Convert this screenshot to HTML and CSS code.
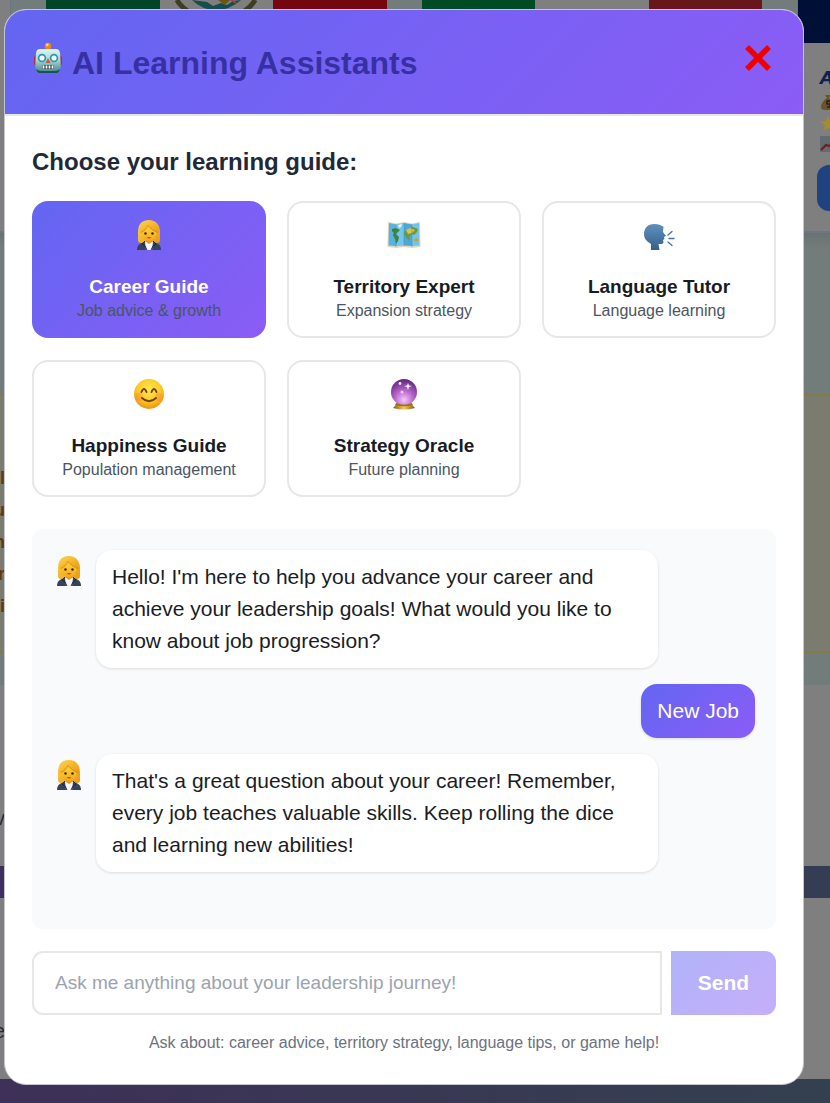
FILE: index.html
```html
<!DOCTYPE html>
<html lang="en">
<head>
<meta charset="utf-8">
<meta name="viewport" content="width=device-width, initial-scale=1">
<title>AI Learning Assistants</title>
<link rel="stylesheet" href="styles.css">
</head>
<body>
<svg class="defs" aria-hidden="true">
  <defs>
    <linearGradient id="hair" x1="0" y1="0" x2="1" y2="1"><stop offset="0" stop-color="#ffd24a"/><stop offset="1" stop-color="#e99a13"/></linearGradient>
    <linearGradient id="skin" x1="0" y1="0" x2="0" y2="1"><stop offset="0" stop-color="#ffd83d"/><stop offset="1" stop-color="#f7a91b"/></linearGradient>
    <linearGradient id="metal" x1="0" y1="0" x2="0" y2="1"><stop offset="0" stop-color="#dff6f3"/><stop offset=".45" stop-color="#a8d8d6"/><stop offset="1" stop-color="#3f8488"/></linearGradient>
    <linearGradient id="head" x1="0" y1="0" x2="0" y2="1"><stop offset="0" stop-color="#5f91bd"/><stop offset="1" stop-color="#345f8d"/></linearGradient>
    <radialGradient id="face" cx=".5" cy=".35" r=".65"><stop offset="0" stop-color="#ffe94a"/><stop offset=".6" stop-color="#fdc927"/><stop offset="1" stop-color="#ee9312"/></radialGradient>
    <radialGradient id="orb" cx=".5" cy=".8" r=".8"><stop offset="0" stop-color="#f3c9fb"/><stop offset=".45" stop-color="#b766cb"/><stop offset="1" stop-color="#5b2378"/></radialGradient>
    <linearGradient id="gold" x1="0" y1="0" x2="1" y2="0"><stop offset="0" stop-color="#8a5a12"/><stop offset=".5" stop-color="#f2ca55"/><stop offset="1" stop-color="#8a5a12"/></linearGradient>
    <symbol id="woman" viewBox="0 0 30 32">
      <path d="M15 1C7 1 4 6 4 13v8q0 3 3 3h16q3 0 3-3v-8C26 6 22 1 15 1Z" fill="url(#hair)"/>
      <path d="M3 31c0-5 3-7 8-8h8c5 1 8 3 8 8Z" fill="#34445d"/>
      <path d="M11 23h8l-1 8h-6Z" fill="#f4f8fc"/>
      <path d="M12 19h6v4l-3 2-3-2Z" fill="#e59a1c"/>
      <path d="M11 22l-3 3 3 2 2 4M19 22l3 3-3 2-2 4" fill="none" stroke="#1c2940" stroke-width="1"/>
      <path d="M7.500 12c0-4 3-7 7.500-7s7.500 3 7.500 8c0 5-3.500 9-7.500 9s-7.500-4-7.500-10Z" fill="url(#skin)"/>
      <path d="M5 14C5 7 9 2.500 16 2.500c6 0 9 5 9 11-4-1-8.500-3.500-11-7-1.500 3.500-4 6-9 7.500Z" fill="url(#hair)"/>
      <path d="M14 6.500c2.500 3.500 6.500 6 10 7M14 6.500c-1.500 3-4 5.500-7 7" fill="none" stroke="#c47c0d" stroke-width=".7"/>
      <circle cx="11.500" cy="14.500" r="1.300" fill="#41270f"/><circle cx="18.500" cy="14.500" r="1.300" fill="#41270f"/>
      <path d="M12.500 18.500q2.500-1 5 0-2.500 2-5 0Z" fill="#bd492e"/>
    </symbol>
    <symbol id="robot" viewBox="0 0 30 32">
      <path d="M14 5h2v5h-2Z" fill="#446"/><circle cx="15" cy="4" r="3.300" fill="#e88b16"/><circle cx="14.300" cy="2.900" r="1.400" fill="#ffd36a"/>
      <rect x="1" y="14" width="4" height="9" rx="1.500" fill="#b72b40"/><rect x="25" y="14" width="4" height="9" rx="1.500" fill="#b72b40"/>
      <path d="M7 7h16q3.500 0 4 4l.5 7q.5 7-.5 10-1 3-4 3H7q-3 0-4-3-1-3-.5-10L3 11q.5-4 4-4Z" fill="url(#metal)"/>
      <path d="M3 27q1 4 4 4h16q3 0 4-4-2 2-5 2H8q-3 0-5-2Z" fill="#1f4f57"/>
      <g fill="#fff" stroke="#249bad" stroke-width="1.700"><circle cx="9" cy="16" r="3.400"/><circle cx="21" cy="16" r="3.400"/></g>
      <path d="m15 16 2.500 5h-5Z" fill="#d9503f"/>
      <rect x="9" y="23" width="12" height="4" rx="1.500" fill="#344d57"/>
      <path d="M10.500 23.500v3M13.500 23.500v3M16.500 23.500v3M19.500 23.500v3" stroke="#fff" stroke-width="1.700"/>
    </symbol>
    <symbol id="map" viewBox="0 0 34 30">
      <path d="m1 2 8 1.500L17 2l8 1.500L33 2l.5 25-8.500 1-8-1-8 1-8.500-1Z" fill="#e8d4bd"/>
      <path d="m2 3 7 1.500V26l-7.500-.5Z" fill="#55b3df"/><path d="m9 4.500 8-1.500v22.500L9 26Z" fill="#73c6e9"/><path d="m17 3 8 1.500V26l-8-.5Z" fill="#4ba9da"/><path d="m25 4.500 7-1.500.5 22.500L25 26Z" fill="#72c5e8"/>
      <path d="m5 9 4-1 4 2-2 2-2 2 3 3-1 4-2 3-1-5-2-4 1-2-2-2Z" fill="#427f36"/>
      <path d="m18 11 3-2 5-2 5 2-1 3-3 3-2-1-2 2-1 5-3-4-2-3Z" fill="#729737"/>
      <path d="m19 10 4-2 5 2-3 3-4 1Z" fill="#d9c254"/><path d="m27 19 3-1 2 2-2 2-3-1Z" fill="#bca94b"/><path d="m11 5 4-1-1 3-2 1Z" fill="#edf7ef"/>
      <path d="M9 4v23M17 3v23M25 4v23" stroke="#378cb2" stroke-opacity=".45"/>
    </symbol>
    <symbol id="speak" viewBox="0 0 32 28">
      <path d="M8 27v-6C3 18 1 15 1 11 1 5 5 1 11 1c5 0 8 2 9.500 2.500L20 9l3 4-2 1 .5 2-1.500 1 .5 2q0 2-3 2h-2l1 6Z" fill="url(#head)"/>
      <path d="m25 12 4-3.500M26 15.500h5M25 19l4 3.500" stroke="#4673a0" stroke-width="1.300" stroke-linecap="round"/>
    </symbol>
    <symbol id="smile" viewBox="0 0 32 32">
      <circle cx="16" cy="16" r="15" fill="url(#face)"/>
      <circle cx="6" cy="19" r="4" fill="#f57a37" opacity=".35"/><circle cx="26" cy="19" r="4" fill="#f57a37" opacity=".35"/>
      <path d="M8.500 14q2.500-6 5 0M18.500 14q2.500-6 5 0M9 20q7 6.500 14 0" fill="none" stroke="#71420f" stroke-width="1.900" stroke-linecap="round"/>
    </symbol>
    <symbol id="crystal" viewBox="0 0 28 32">
      <path d="M6 25h16l1 3 2 2q-11 3-22 0l2-2Z" fill="url(#gold)"/>
      <circle cx="14" cy="14" r="13" fill="url(#orb)"/>
      <path d="M6 26q8 3 16 0" fill="none" stroke="#a36c1e" stroke-width="1.500"/>
      <path d="m18 5 1 2.500L22 8l-3 1-1 3-1-3-3-1 3-.5Z" fill="#fff"/><circle cx="10" cy="5.500" r="1.400" fill="#fbe8ff"/><circle cx="12" cy="14" r="1.500" fill="#ffc7fa"/>
    </symbol>
  </defs>
</svg>

<div class="page" aria-hidden="true">
  <div class="flags">
    <div class="flag flag-mx"><i></i><i class="crest"><svg viewBox="0 0 84 12"><path d="M3 0q3 6 12 12M81 0q-3 6-12 12" stroke="#3d3d22" stroke-width="5" fill="none"/><path d="M18 0q10 10 24 10Q56 10 67 0l-8 1-6 4-6-2-8 3-6-4Z" fill="#174d4c"/><path d="m44 0 7 5 5-5" fill="#6c5416"/><path d="m57 0 5 3" stroke="#a0433c" stroke-width="2"/></svg></i><i></i></div>
    <div class="flag flag-it"><i></i><i></i><i></i></div>
  </div>
  <div class="country">
    <div class="country-head"></div>
    <div class="country-body">
      <b>A</b>
      <svg viewBox="0 0 16 16"><path d="M5 1h6L9 4q6 4 6 9 0 3-4 3H5q-4 0-4-3 0-5 6-9Z" fill="#6b5526"/><path d="M10 7H7v3h3v3H7" stroke="#242016" stroke-width="1.500" fill="none"/></svg>
      <svg viewBox="0 0 16 16"><path d="m8 0 2 6 6 .5-5 4 2 5.500-5-3-5 3 2-5.500-5-4L6 6Z" fill="#a38b31"/></svg>
      <svg viewBox="0 0 16 16"><path d="M0 0h16v16H0Z" fill="#646a72"/><path d="m1 14 5-5 3 1 7-6" stroke="#7b1520" stroke-width="2" fill="none"/></svg>
      <span></span>
    </div>
  </div>
  <div class="sky"></div>
  <div class="notice"><span>il</span><span>u</span><span>n</span><span>r</span><span>li</span></div>
  <div class="sky sky-short"></div>
  <div class="panel"><span>v</span></div>
  <div class="band"></div>
  <div class="panel panel-low"><span>e</span></div>
  <div class="band foot"></div>
</div>

<main class="modal" role="dialog" aria-labelledby="title">
  <header class="modal-head">
    <h1 id="title"><svg class="robot" aria-hidden="true"><use href="#robot"/></svg><span>AI Learning Assistants</span></h1>
    <button class="close" type="button" aria-label="Close"><svg viewBox="0 0 28 28"><path d="m3 3 22 22M25 3 3 25" stroke="#f00000" stroke-width="5.500"/></svg></button>
  </header>
  <div class="modal-body">
    <h2>Choose your learning guide:</h2>
    <div class="guides">
      <button type="button" class="guide active" aria-pressed="true"><svg><use href="#woman"/></svg><strong>Career Guide</strong><span>Job advice &amp; growth</span></button>
      <button type="button" class="guide"><svg><use href="#map"/></svg><strong>Territory Expert</strong><span>Expansion strategy</span></button>
      <button type="button" class="guide"><svg class="low"><use href="#speak"/></svg><strong>Language Tutor</strong><span>Language learning</span></button>
      <button type="button" class="guide"><svg><use href="#smile"/></svg><strong>Happiness Guide</strong><span>Population management</span></button>
      <button type="button" class="guide"><svg><use href="#crystal"/></svg><strong>Strategy Oracle</strong><span>Future planning</span></button>
    </div>
    <section class="chat" aria-label="Conversation">
      <div class="message"><svg class="avatar" aria-hidden="true"><use href="#woman"/></svg><p>Hello! I'm here to help you advance your career and achieve your leadership goals! What would you like to know about job progression?</p></div>
      <div class="message user"><p>New Job</p></div>
      <div class="message"><svg class="avatar" aria-hidden="true"><use href="#woman"/></svg><p>That's a great question about your career! Remember, every job teaches valuable skills. Keep rolling the dice and learning new abilities!</p></div>
    </section>
    <form class="ask">
      <input type="text" aria-label="Your question" placeholder="Ask me anything about your leadership journey!">
      <button type="button" disabled>Send</button>
    </form>
    <p class="hint">Ask about: career advice, territory strategy, language tips, or game help!</p>
  </div>
</main>
</body>
</html>
```

FILE: styles.css
```css
* { box-sizing: border-box; }

body {
  margin: 0;
  display: grid;
  min-height: 100vh;
  font-family: "Liberation Sans", Arial, sans-serif;
  color: #1f2937;
}

.page, .modal { grid-area: 1 / 1; }
.defs { position: absolute; width: 0; height: 0; }
h1, h2, p { margin: 0; }
button, input { font-family: inherit; }

/* Dimmed page behind the dialog */
.page {
  position: relative;
  display: flex;
  flex-direction: column;
  overflow: hidden;
  background: #727c7b;
}
.flags {
  position: absolute;
  top: 0;
  left: 10px;
  right: 32px;
  height: 43px;
  display: flex;
  gap: 35px;
  padding: 0 35px;
  border: solid #687785;
  border-width: 0 1px;
  background: #727c7b;
}
.flag { flex: 1; display: flex; }
.flag i { flex: 1; }
.crest svg { display: block; width: 84px; height: 12px; margin: 0 auto; }
.flag-mx i:first-child { background: #004526; }
.flag-mx i:last-child { background: #74060f; }
.flag i:nth-child(2) { background: #7f7f7f; }
.flag-it i:first-child { background: #004b24; }
.flag-it i:last-child { background: #67161b; }

.country { height: 233px; background: #7f7f7f; border-bottom: 2px solid #6b7784; }
.country-head { width: 32px; height: 43px; margin-left: auto; background: #000f35; }
.country-body {
  width: 32px;
  height: 188px;
  margin-left: auto;
  padding: 24px 0 0 22px;
  display: flex;
  flex-direction: column;
  gap: 5px;
  overflow: hidden;
}
.country-body b { font: italic bold 18px/22px "DejaVu Sans", sans-serif; color: #102052; }
.country-body svg { width: 16px; height: 16px; flex: none; }
.country-body span { width: 60px; height: 46px; margin: 8px 0 0 -3px; flex: none; border-radius: 12px; background: #1f4380; }

.sky { height: 161px; background: linear-gradient(#697270, #727c7b 14px); }
.sky-short { height: 32px; background: #727c7b; }
.notice {
  height: 259px;
  padding-top: 66px;
  background: #7c7b70;
  border: solid #837a4a;
  border-width: 2px 0;
  color: #5c3c0c;
  font: bold 18px/32px "Liberation Sans", Arial, sans-serif;
}
.notice span, .panel span { display: flex; justify-content: flex-end; width: 5px; }
.panel { height: 181px; padding-top: 122px; background: #7f7f7f; color: #252a33; font-size: 20px; }
.band { height: 32px; background: linear-gradient(90deg, #3f2f5f, #343d54); }
.foot { flex: 1; min-height: 24px; background: linear-gradient(90deg, #3e3058, #33404f); }

/* Dialog */
.modal {
  position: relative;
  margin: 9px 26px 18px 4px;
  border: 1px solid #c4c5cd;
  border-radius: 22px;
  overflow: hidden;
  background: #fff;
}
.modal-head {
  display: flex;
  align-items: flex-start;
  justify-content: space-between;
  height: 106px;
  padding: 32px 29px 0 28px;
  border-bottom: 2px solid #e5e7eb;
  background: linear-gradient(135deg, #6366f1, #8b5cf6);
}
h1 { display: flex; gap: 9px; font-size: 32px; line-height: 43px; color: #3730a3; }
.robot { width: 30px; height: 32px; }
.close { width: 32px; height: 32px; padding: 2px; border: 0; background: none; }
.close svg { display: block; width: 28px; height: 28px; }
.modal-body { padding: 30px 27px; }
h2 { font-size: 24px; line-height: 32px; }

.guides { display: grid; grid-template-columns: repeat(3, 1fr); gap: 22px 21px; margin-top: 23px; }
.guide {
  display: flex;
  flex-direction: column;
  align-items: center;
  height: 137px;
  padding: 16px 8px 0;
  border: 2px solid #e5e7eb;
  border-radius: 16px;
  background: #fff;
  color: #1f2937;
}
.guide svg { width: 34px; height: 32px; }
.guide .low { padding-top: 4px; }
.guide strong { margin-top: 24px; font-size: 19px; line-height: 24px; color: #171b24; }
.guide span { font-size: 16px; line-height: 23px; color: #4b5563; }
.guide.active {
  border-color: transparent;
  background: linear-gradient(135deg, #6366f1, #8b5cf6) border-box;
}
.guide.active strong { color: #fff; }

.chat {
  display: flex;
  flex-direction: column;
  gap: 16px;
  min-height: 400px;
  margin-top: 32px;
  padding: 21px;
  border-radius: 11px;
  background: #f9fafb;
}
.message { display: flex; align-items: flex-start; gap: 11px; }
.avatar { width: 32px; height: 32px; margin-top: 5px; flex: none; }
.message p {
  max-width: 80%;
  padding: 11px 16px;
  border-radius: 16px;
  background: #fff;
  box-shadow: 0 1px 3px rgba(0, 0, 0, .12);
  color: #1a1d24;
  font-size: 21px;
  line-height: 32px;
}
.message.user { justify-content: flex-end; }
.message.user p { background: linear-gradient(135deg, #6366f1, #8b5cf6); color: #fff; }

.ask { display: flex; gap: 9px; margin-top: 22px; }
.ask input {
  flex: 1;
  min-width: 0;
  height: 64px;
  padding: 0 21px;
  border: 2px solid #e5e7eb;
  border-radius: 11px 0 0 11px;
  background: #fff;
  font-size: 19px;
}
.ask input::placeholder { color: #9ca3af; opacity: 1; }
.ask button {
  width: 105px;
  border: 0;
  border-radius: 0 11px 11px 0;
  background: linear-gradient(135deg, #b1b3f8, #c5aefa);
  color: #fff;
  font-size: 21px;
  font-weight: bold;
}
.hint { margin-top: 16px; text-align: center; font-size: 16px; line-height: 23px; color: #6b7280; }
```
